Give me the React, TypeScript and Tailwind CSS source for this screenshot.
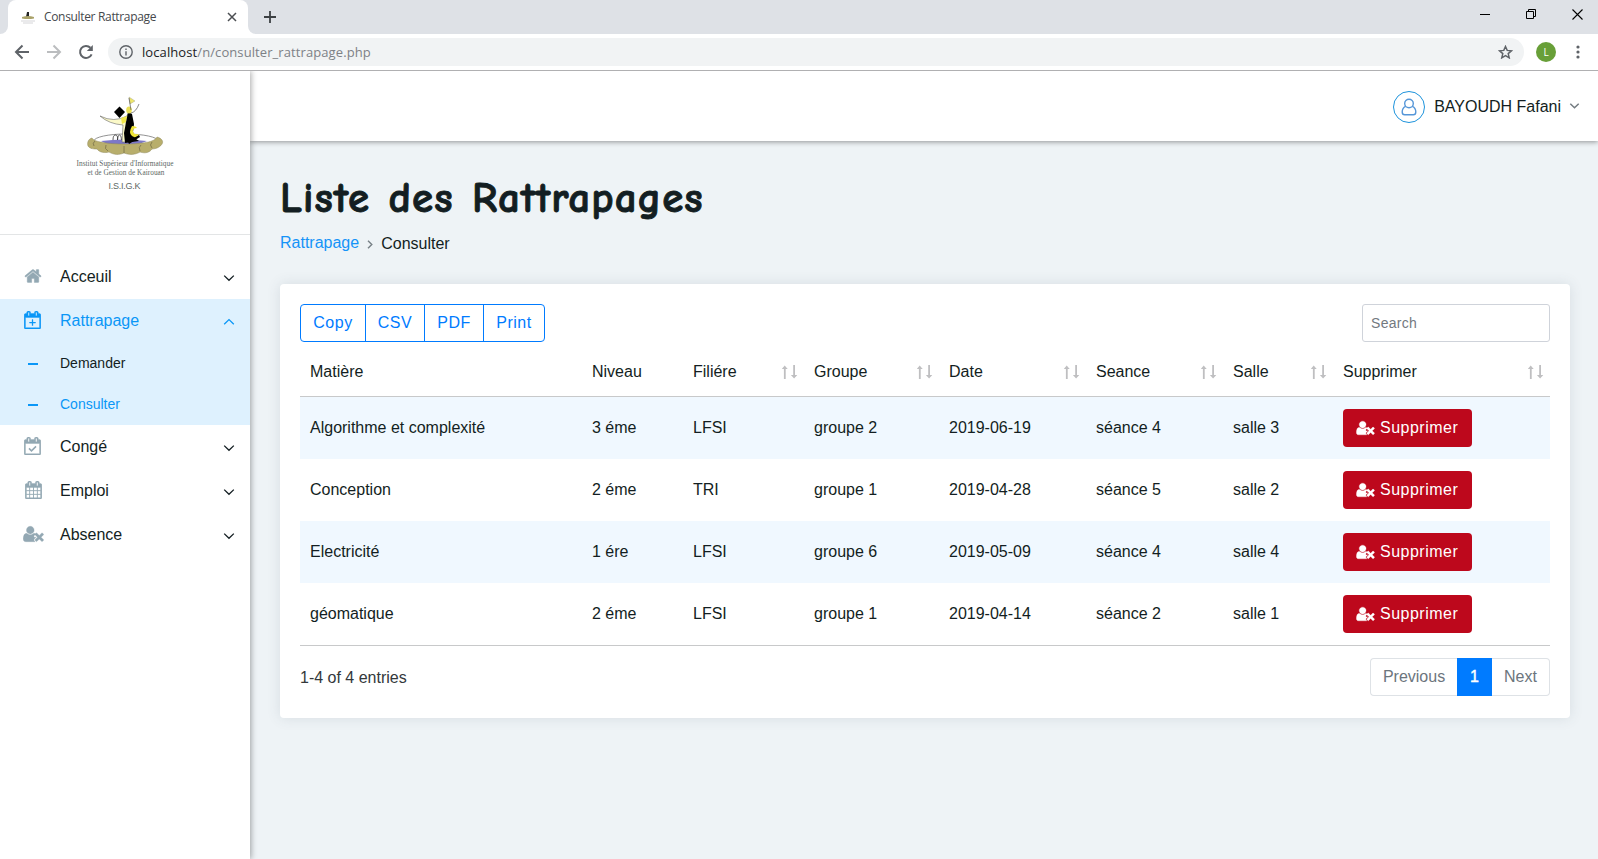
import React from "react";

const CAL_BODY =
  "M1536 256q52 0 90 38t38 90v1280q0 52-38 90t-90 38h-1408q-52 0-90-38t-38-90v-1280q0-52 38-90t90-38h128v-96q0-66 47-113t113-47h64q66 0 113 47t47 113v96h384v-96q0-66 47-113t113-47h64q66 0 113 47t47 113v96h128zm-384-96v288q0 14 9 23t23 9h64q14 0 23-9t9-23v-288q0-14-9-23t-23-9h-64q-14 0-23 9t-9 23zm-768 0v288q0 14 9 23t23 9h64q14 0 23-9t9-23v-288q0-14-9-23t-23-9h-64q-14 0-23 9t-9 23zm1152 1504v-1024h-1408v1024h1408z";
const PLUS =
  "M896 1088h224q14 0 23 9t9 23v64q0 14-9 23t-23 9h-224v224q0 14-9 23t-23 9h-64q-14 0-23-9t-9-23v-224h-224q-14 0-23-9t-9-23v-64q0-14 9-23t23-9h224v-224q0-14 9-23t23-9h64q14 0 23 9t9 23v224z";
const HOME =
  "M1472 992v480q0 26-19 45t-45 19h-384v-384h-256v384h-384q-26 0-45-19t-19-45v-480q0-1 .5-3t.5-3l575-474 575 474q1 2 1 6zm223-69l-62 74q-8 9-21 11h-3q-13 0-21-7l-692-577-692 577q-12 8-24 7-13-2-21-11l-62-74q-8-10-7-23.5t11-21.5l719-599q32-26 76-26t76 26l244 204v-195q0-14 9-23t23-9h192q14 0 23 9t9 23v408l219 182q10 8 11 21.5t-7 23.5z";
const USER_TIMES =
  "M704 896q-159 0-271.5-112.5t-112.5-271.5 112.5-271.5 271.5-112.5 271.5 112.5 112.5 271.5-112.5 271.5-271.5 112.5zm1077 320l249 249q9 9 9 23 0 13-9 22l-136 136q-9 9-22 9-14 0-23-9l-249-249-249 249q-9 9-23 9-13 0-22-9l-136-136q-9-9-9-22 0-14 9-23l249-249-249-249q-9-9-9-23 0-13 9-22l136-136q9-9 22-9 14 0 23 9l249 249 249-249q9-9 23-9 13 0 22 9l136 136q9 9 9 22 0 14-9 23zm-498 0l-181 181q-37 37-37 91 0 53 37 90l83 83q-21 3-44 3h-874q-121 0-194-69t-73-190q0-53 3.5-103.5t14-109 26.5-108.5 43-97.5 62-81 85.5-53.5 111.5-20q19 0 39 17 79 61 154.5 91.5t164.5 30.5 164.5-30.5 154.5-91.5q20-17 39-17 132 0 217 96-61 0-98 37l-79 79q-37 37-37 90t37 90z";

function HomeIcon() {
  return (
    <svg width="18" height="18" viewBox="0 0 1792 1792" fill="currentColor" stroke="currentColor" strokeWidth="40">
      <path d={HOME} />
    </svg>
  );
}

function CalendarIcon({ kind }: { kind: "plus" | "check" | "grid" }) {
  return (
    <svg width="17" height="18" viewBox="0 0 1664 1792" fill="currentColor">
      <path d={CAL_BODY} stroke="currentColor" strokeWidth="40" />
      {kind === "plus" && <path d={PLUS} />}
      {kind === "check" && (
        <path d="M480 1130l252 252 450-450" fill="none" stroke="currentColor" strokeWidth="150" />
      )}
      {kind === "grid" && (
        <path
          d="M448 600v1100M832 600v1100M1216 600v1100M100 960h1464M100 1330h1464"
          fill="none"
          stroke="currentColor"
          strokeWidth="90"
        />
      )}
    </svg>
  );
}

function UserTimes({ className }: { className: string }) {
  return (
    <svg className={className} viewBox="0 0 2048 1792" fill="currentColor" stroke="currentColor" strokeWidth="30">
      <path d={USER_TIMES} />
    </svg>
  );
}

function Chevron({ up = false }: { up?: boolean }) {
  return (
    <svg width="12" height="8" viewBox="0 0 12 8" fill="none" stroke="currentColor" strokeWidth="1.3">
      <path d={up ? "M1.2 6.3L6 1.6l4.8 4.7" : "M1.2 1.6L6 6.3l4.8-4.7"} />
    </svg>
  );
}

function SortArrows() {
  return (
    <svg width="16" height="14" viewBox="0 0 16 14" fill="#bfbfc1">
      <path d="M2.700 .5L5.700 4H3.700v10H1.900V4H-.3z" />
      <path d="M11.200 0H13v10h2.300l-3.200 3.600L8.900 10h2.300z" />
    </svg>
  );
}

function Logo() {
  return (
    <svg width="130" height="120" viewBox="0 0 130 120" className="shrink-0">
      <g transform="translate(1 0)">
        <ellipse cx="65" cy="56" rx="32" ry="7" fill="#fff" stroke="#777" strokeWidth=".8" />
        <path d="M40 56q23-3 46 0l-8 3q-14 2-32 0z" fill="#7d78c8" />
        <path
          d="M31 53c-4 1-5 5-4 8 2 3 6 3 9 3 3 4 8 4 12 3 5 3 10 3 15 1 5 2 11 2 16-1 6 2 10 0 12-3 5 0 9-3 10-5 2-3-1-6-5-7-2 5-15 7-32 7s-31-2-33-6z"
          fill="#b8ae6c"
          stroke="#8d8658"
          strokeWidth=".5"
        />
        <path d="M33 61q-2-3 1-5M47 66q-4-2-2-6M63 68v-7M79 66q-2-4 1-6M91 63q-3-3 0-6" fill="none" stroke="#77704a" strokeWidth=".8" />
        <path d="M52 55q0-5 2.500-5t2 5q0-5 2-5t2 5" fill="none" stroke="#333" strokeWidth=".8" />
        <path d="M39 31q14 7 27 0l1-2 3 3-5 5 2 20h-6l1-17q-14-1-23-9z" fill="#fbf9c8" stroke="#666" strokeWidth=".6" />
        <path d="M60 33l6-2-1 6-4 2z" fill="#efe64a" />
        <path d="M58.500 21.500l5.500 5.500-5.500 6-5.500-6z" fill="#000" />
        <path d="M67 27l4 2 2 10-1 8 3 7 3 2-14 2-1-10z" fill="#000" />
        <path d="M66 55l12-5 1 2-11 7z" fill="#000" />
        <path d="M71 41q-4 7 0 10 4 3 7-2-5 1-6-2-1-4 4-4-1-2-5-2z" fill="#eee437" />
        <ellipse cx="68" cy="25" rx="2.800" ry="3.500" fill="#eadf57" />
        <path d="M68 12l6 4-5 3z" fill="#eee66a" stroke="#998" strokeWidth=".4" />
        <path d="M68 13l2 12M70 28q5-1 8-9" fill="none" stroke="#555" strokeWidth=".7" />
      </g>
      <g fill="#5c6864" textAnchor="middle">
        <text x="65" y="81" fontSize="7.300" textLength="97" fontFamily="'Liberation Serif', serif">Institut Supérieur d'Informatique</text>
        <text x="66" y="90" fontSize="7.300" textLength="77" fontFamily="'Liberation Serif', serif">et de Gestion de Kairouan</text>
        <text x="64.500" y="103.500" fontSize="9" textLength="32" fontFamily="'Liberation Sans', sans-serif">I.S.I.G.K</text>
      </g>
    </svg>
  );
}

function BrowserBar() {
  return (
    <div className="relative z-20 h-[71px] shrink-0 border-b border-[#b0b0b2] bg-white font-['Open_Sans',sans-serif]">
      <div className="flex h-[34px] items-stretch bg-[#dee1e6]">
        <div className="flex w-2 items-end bg-white">
          <div className="h-full w-2 rounded-br-lg bg-[#dee1e6]" />
        </div>
        <div className="flex w-60 items-center rounded-t-lg bg-white pr-[11px] pl-3">
          <svg width="16" height="14" viewBox="0 0 16 14">
            <path d="M7 2l2 0v5H6z" fill="#222" />
            <path d="M2 7q6-2 12 0v1.500q-6 1-12 0z" fill="#aaa269" />
            <path d="M1 11h14M3 13h10" stroke="#d5d5d8" />
          </svg>
          <span className="ml-2 text-[12px] tracking-[-0.33px] text-[#45484c]">Consulter Rattrapage</span>
          <svg className="ml-auto" width="10" height="10" viewBox="0 0 10 10" stroke="#4b4e52" strokeWidth="1.500">
            <path d="M1 1l8 8M9 1L1 9" />
          </svg>
        </div>
        <div className="w-2 bg-white">
          <div className="h-full w-2 rounded-bl-lg bg-[#dee1e6]" />
        </div>
        <svg className="ml-2 self-center" width="12" height="12" viewBox="0 0 12 12" stroke="#3c4043" strokeWidth="1.800">
          <path d="M6 0v12M0 6h12" />
        </svg>
        <div className="mr-[15px] mb-[5px] ml-auto flex items-center gap-[35px]">
          <svg width="11" height="11" viewBox="0 0 11 11" stroke="#000">
            <path d="M0 5.500h10" />
          </svg>
          <svg width="11" height="11" viewBox="0 0 11 11" fill="none" stroke="#000">
            <path d="M.5 2.500h7v7h-7zM2.500 2V.5h7v7H8" />
          </svg>
          <svg width="11" height="11" viewBox="0 0 11 11" stroke="#000" strokeWidth="1.100">
            <path d="M.5.500l10 10M10.500.5l-10 10" />
          </svg>
        </div>
      </div>
      <div className="flex h-9 items-center pr-[18px] pl-[14px]">
        <svg width="16" height="16" viewBox="0 0 16 16" fill="none" stroke="#5f6368" strokeWidth="2">
          <path d="M15 8H2.500M8.500 1.500L2 8l6.500 6.500" />
        </svg>
        <svg className="ml-4" width="16" height="16" viewBox="0 0 16 16" fill="none" stroke="#bbbdbf" strokeWidth="2">
          <path d="M1 8h12.500M7.500 1.500L14 8l-6.500 6.500" />
        </svg>
        <svg className="ml-4" width="16" height="16" viewBox="0 0 16 16" fill="none" stroke="#5f6368" strokeWidth="2">
          <path d="M13.600 10.300A6 6 0 1 1 12.400 3.800" />
          <path d="M14.800 1v6h-6z" fill="#5f6368" stroke="none" />
        </svg>
        <div className="ml-[14px] flex h-7 flex-1 items-center rounded-full bg-[#f1f3f4] pr-[11px] pl-[11px]">
          <svg width="14" height="14" viewBox="0 0 14 14" fill="none" stroke="#5f6368" strokeWidth="1.400">
            <circle cx="7" cy="7" r="6.200" />
            <path d="M7 6.200v4.300M7 3.400v1.500" />
          </svg>
          <span className="ml-[9px] text-[13px] tracking-[0.09px] text-[#7d8186]">
            <span className="text-[#202124]">localhost</span>/n/consulter_rattrapage.php
          </span>
          <svg className="ml-auto" width="15" height="14" viewBox="0 0 15 14" fill="none" stroke="#5f6368" strokeWidth="1.500">
            <path d="M7.500 1.500l1.700 3.900 4.200.4-3.200 2.800 1 4.200-3.700-2.200-3.700 2.200 1-4.200L1.600 5.800l4.200-.4z" />
          </svg>
        </div>
        <div className="ml-3 flex size-5 items-center justify-center rounded-full bg-[#689f38] text-[10px] text-white">L</div>
        <svg className="ml-[20px]" width="4" height="14" viewBox="0 0 4 14" fill="#5f6368">
          <circle cx="2" cy="2" r="1.600" />
          <circle cx="2" cy="7" r="1.600" />
          <circle cx="2" cy="12" r="1.600" />
        </svg>
      </div>
    </div>
  );
}

function MenuItem({ icon, label, active = false }: { icon: React.ReactNode; label: string; active?: boolean }) {
  return (
    <div className={active ? "flex h-11 items-center pr-[15px] text-[#0a97f7]" : "flex h-11 items-center pr-[15px] text-[#131e22]"}>
      <span className={active ? "flex w-[60px] justify-start pb-0.5 pl-6" : "flex w-[60px] justify-start pb-0.5 pl-6 text-[#93a8b3]"}>{icon}</span>
      <span>{label}</span>
      <span className="mt-px ml-auto">
        <Chevron up={active} />
      </span>
    </div>
  );
}

function SubItem({ label, active = false }: { label: string; active?: boolean }) {
  return (
    <div className="flex h-[41px] items-center">
      <span className="mr-[22px] ml-7 h-0.5 w-[10px] bg-[#0a97f7]" />
      <span className={active ? "pb-0.5 text-sm text-[#0a97f7]" : "pb-0.5 text-sm text-[#131e22]"}>{label}</span>
    </div>
  );
}

function Sidebar() {
  return (
    <aside className="z-10 flex w-[250px] shrink-0 flex-col bg-white shadow-[1px_0_6px_rgba(0,0,0,0.35)]">
      <div className="flex h-[164px] justify-center border-b border-[#e3e5e6] pt-[14px]">
        <Logo />
      </div>
      <nav className="pt-5">
        <MenuItem icon={<HomeIcon />} label="Acceuil" />
        <div className="bg-[#def1fe]">
          <MenuItem icon={<CalendarIcon kind="plus" />} label="Rattrapage" active />
          <SubItem label="Demander" />
          <SubItem label="Consulter" active />
        </div>
        <MenuItem icon={<CalendarIcon kind="check" />} label="Congé" />
        <MenuItem icon={<span className="pl-px"><CalendarIcon kind="grid" /></span>} label="Emploi" />
        <MenuItem icon={<UserTimes className="-ml-px h-[18px] w-[21px]" />} label="Absence" />
      </nav>
    </aside>
  );
}

const COLUMNS = ["Matière", "Niveau", "Filiére", "Groupe", "Date", "Seance", "Salle", "Supprimer"];
const ROWS = [
  ["Algorithme et complexité", "3 éme", "LFSI", "groupe 2", "2019-06-19", "séance 4", "salle 3"],
  ["Conception", "2 éme", "TRI", "groupe 1", "2019-04-28", "séance 5", "salle 2"],
  ["Electricité", "1 ére", "LFSI", "groupe 6", "2019-05-09", "séance 4", "salle 4"],
  ["géomatique", "2 éme", "LFSI", "groupe 1", "2019-04-14", "séance 2", "salle 1"],
];
const GRID = "grid grid-cols-[282px_101px_121px_135px_147px_137px_110px_217px] items-center";

function Card() {
  return (
    <section className="mt-7 h-[434px] rounded bg-white p-5 shadow-[0_0_14px_rgba(60,80,90,0.13)]">
      <div className="flex h-[38px] justify-between">
        <div className="flex divide-x divide-[#007bff] rounded border border-[#007bff] leading-[34px] tracking-[0.5px] text-[#007bff]">
          <button className="w-[65px]">Copy</button>
          <button className="w-[59px]">CSV</button>
          <button className="w-[59px]">PDF</button>
          <button className="w-[60px]">Print</button>
        </div>
        <input
          placeholder="Search"
          className="w-[188px] rounded-[3px] border border-[#cfd3da] px-2 text-sm tracking-[0.3px] placeholder:text-[#73797f]"
        />
      </div>
      <div className={`${GRID} h-[55px] border-b border-[#c8c9ca] pt-[6px]`}>
        {COLUMNS.map((c, i) => (
          <div key={c} className="flex items-center justify-between pr-[6px] pl-[10px]">
            <span>{c}</span>
            {i > 1 && <SortArrows />}
          </div>
        ))}
      </div>
      <div>
        {ROWS.map((row) => (
          <div key={row[0]} className={`${GRID} h-[62px] odd:bg-[#f0f8ff]`}>
            {row.map((cell, i) => (
              <div key={i} className="pl-[10px]">
                {cell}
              </div>
            ))}
            <div className="pl-[10px]">
              <button className="flex h-[38px] w-[129px] items-center rounded bg-[#bd081c] pl-[13px] tracking-[0.5px] text-white">
                <UserTimes className="mr-[5px] h-4 w-[19px]" />
                <span>Supprimer</span>
              </button>
            </div>
          </div>
        ))}
      </div>
      <div className="flex items-start justify-between border-t border-[#c8c9ca] pt-3">
        <span className="pt-2 text-[#33383b]">1-4 of 4 entries</span>
        <div className="flex h-[38px] leading-[34px] text-[#6c757d]">
          <button className="w-[87px] rounded-l border border-r-0 border-[#dee2e6]">Previous</button>
          <button className="w-[35px] bg-[#007bff] text-white [-webkit-text-stroke:0.4px_white]">1</button>
          <button className="w-[58px] rounded-r border border-l-0 border-[#dee2e6]">Next</button>
        </div>
      </div>
    </section>
  );
}

export default function App() {
  return (
    <div className="flex h-[859px] w-[1598px] flex-col overflow-hidden bg-[#eef3f6] font-['Liberation_Sans',Arial,sans-serif] text-base leading-6 text-[#131e22]">
      <BrowserBar />
      <div className="flex flex-1">
        <Sidebar />
        <div className="flex flex-1 flex-col">
          <header className="flex h-[70px] shrink-0 items-center justify-end bg-white pr-[18px] shadow-[0_1px_5px_rgba(0,0,0,0.4)]">
            <span className="mt-0.5 flex size-8 items-center justify-center rounded-full border border-[#1d93dc] text-[#5596d8]">
              <svg width="16" height="18" viewBox="0 0 16 18" fill="none" stroke="currentColor" strokeWidth="1.400">
                <circle cx="8" cy="5.500" r="4.300" />
                <path d="M4.600 8.300C2.200 9.300 1.200 11.500 1.200 14c0 1.700 1 2.800 2.500 2.800h8.600c1.500 0 2.500-1.100 2.500-2.800 0-2.500-1-4.700-3.400-5.700" />
              </svg>
            </span>
            <span className="mt-0.5 mr-[8px] ml-[9px]">BAYOUDH Fafani</span>
            <svg width="11" height="6" viewBox="0 0 11 6" fill="none" stroke="#737b80" strokeWidth="1.500">
              <path d="M1.300 .7l4.200 4L9.700 .7" />
            </svg>
          </header>
          <main className="px-[30px] pr-7 pt-[27px]">
            <h1 className="h-16 whitespace-nowrap font-['Comic_Sans_MS','Comic_Neue',Inter,sans-serif] text-[43px] leading-[60px] font-semibold tracking-[1.05px] [-webkit-text-stroke:0.9px_#131e22] [font-variant-ligatures:none] [word-spacing:2px]">
              Liste des Rattrapages
            </h1>
            <div className="flex h-6 items-center">
              <a className="pb-0.5 text-[#1593f8]">Rattrapage</a>
              <svg className="mr-2 ml-2" width="6" height="9" viewBox="0 0 6 9" fill="none" stroke="#778086" strokeWidth="1.400">
                <path d="M1 .7l3.800 3.800L1 8.300" />
              </svg>
              <span>Consulter</span>
            </div>
            <Card />
          </main>
        </div>
      </div>
    </div>
  );
}
